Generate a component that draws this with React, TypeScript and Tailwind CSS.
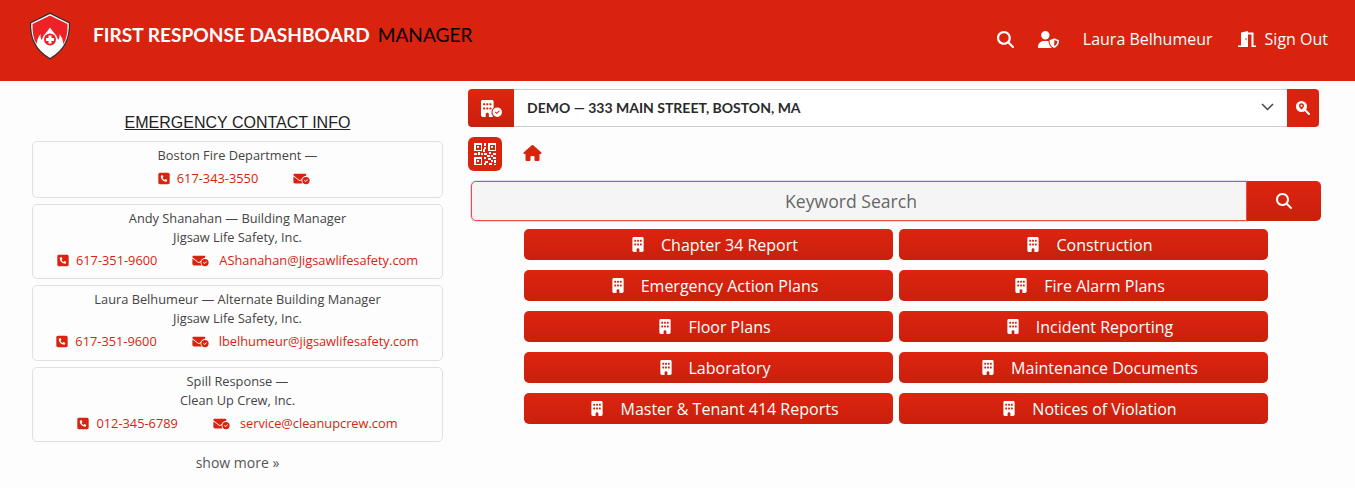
import React from "react";
import { FaBuilding, FaMagnifyingGlass, FaUserShield, FaHouse, FaSquarePhone, FaEnvelopeCircleCheck, FaBuildingCircleCheck } from "react-icons/fa6";

const Logo = () => (
  <svg width="42" height="48" viewBox="0 0 42 48" className="shrink-0">
    <path d="M21 0.500 L41 10.500 C41.500 25 37 38 21 47.500 C5 38 0.500 25 1 10.500 Z" fill="#2f2f2f" />
    <path d="M21 2 L39.800 11.300 C40.200 25 36 37 21 46 C6 37 1.800 25 2.200 11.300 Z" fill="#fff" />
    <path d="M21 3.500 L38.500 12 C38.800 20 37.500 27 34.500 32 L7.500 32 C4.500 27 3.200 20 3.500 12 Z" fill="#ec2227" />
    <path d="M21 15.500 C23.500 20 28 22.500 29 28 C30.500 26.500 30.800 24.500 30.300 22 C33 25 34 28.500 34.500 32 L7.500 32 C8 28.500 9 25 11.700 22 C11.200 24.500 11.500 26.500 13 28 C14 22.500 18.500 20 21 15.500 Z" fill="#fff" />
    <circle cx="21" cy="27.500" r="6" fill="#ec2227" />
    <path d="M19.500 23.500 h3 v2.500 h2.500 v3 h-2.500 v2.500 h-3 v-2.500 h-2.500 v-3 h2.500 Z" fill="#fff" />
  </svg>
);

const Finder = ({ x, y }: { x: number; y: number }) => (
  <g>
    <rect x={x + 0.75} y={y + 0.75} width="6.500" height="6.500" fill="none" stroke="#fff" strokeWidth="1.500" />
    <rect x={x + 3} y={y + 3} width="2" height="2" fill="#fff" />
  </g>
);

const dataBlocks: [number, number, number, number][] = [
  [10, 0, 2, 3], [10, 4, 2, 2], [9, 6, 2, 3],
  [0, 10, 3, 2], [4, 9, 2, 3], [7, 10, 2, 2], [10, 10, 3, 2],
  [15, 9, 2, 2], [19, 10, 3, 2], [13, 12, 3, 2], [17, 12, 2, 2],
  [10, 14, 2, 2], [14, 15, 3, 2], [19, 14, 3, 2], [11, 18, 3, 2],
  [17, 17, 2, 2], [20, 17, 2, 3], [10, 20, 2, 2], [15, 20, 3, 2], [20, 21, 2, 1],
];

const QrIcon = () => (
  <svg width="22" height="22" viewBox="0 0 22 22" fill="#fff" shapeRendering="crispEdges">
    <Finder x={0} y={0} />
    <Finder x={14} y={0} />
    <Finder x={0} y={14} />
    {dataBlocks.map(([x, y, w, h]) => <rect key={`${x}-${y}`} x={x} y={y} width={w} height={h} />)}
  </svg>
);

const SearchPin = () => (
  <svg width="14" height="14" viewBox="0 0 14 14">
    <circle cx="5.500" cy="5.500" r="5.500" fill="#fff" />
    <path d="M9 9 L13 13" stroke="#fff" strokeWidth="2" strokeLinecap="round" />
    <path d="M5.500 2.300 C3.900 2.300 3 3.400 3 4.700 C3 6.200 5.500 8.600 5.500 8.600 C5.500 8.600 8 6.200 8 4.700 C8 3.400 7.100 2.300 5.500 2.300 Z" fill="#d9230f" />
    <circle cx="5.500" cy="4.700" r="1" fill="#fff" />
  </svg>
);

const Door = () => (
  <svg width="18" height="16" viewBox="0 0 18 16" className="ml-[25px] shrink-0">
    <path d="M3 1.500 L10 0 V16 H0 V14.500 H3 Z" fill="#fff" />
    <circle cx="8" cy="8" r="0.800" fill="#d9230f" />
    <path d="M10 1.500 H15.500 V14.500 H18 V16 H13.500 V3.500 H10 Z" fill="#fff" />
  </svg>
);

type C = { lines: string[]; phone: string; email?: string; h: string };
const contacts: C[] = [
  { lines: ["Boston Fire Department —"], phone: "617-343-3550", h: "h-[57px]" },
  { lines: ["Andy Shanahan — Building Manager", "Jigsaw Life Safety, Inc."], phone: "617-351-9600", email: "AShanahan@Jigsawlifesafety.com", h: "h-[75px]" },
  { lines: ["Laura Belhumeur — Alternate Building Manager", "Jigsaw Life Safety, Inc."], phone: "617-351-9600", email: "lbelhumeur@jigsawlifesafety.com", h: "h-[76px]" },
  { lines: ["Spill Response —", "Clean Up Crew, Inc."], phone: "012-345-6789", email: "service@cleanupcrew.com", h: "h-[75px]" },
];

const docs = [
  "Chapter 34 Report", "Construction",
  "Emergency Action Plans", "Fire Alarm Plans",
  "Floor Plans", "Incident Reporting",
  "Laboratory", "Maintenance Documents",
  "Master & Tenant 414 Reports", "Notices of Violation",
];

export default function App() {
  return (
    <div className="h-[488px] w-[1355px] overflow-hidden bg-[#fdfdfd] font-['Open_Sans',sans-serif]">
      <header className="flex h-[81px] bg-[#d9230f] text-white">
        <div className="ml-[29px] mt-[12px]"><Logo /></div>
        <div className="ml-[22px] mt-[22px] h-[26px] font-['Lato',sans-serif] text-[19.100px] leading-[26px] whitespace-nowrap">
          <span className="font-bold">FIRST RESPONSE DASHBOARD</span>
          <span className="ml-[8px] text-[#000]">MANAGER</span>
        </div>
        <div className="ml-auto mr-[27px] mt-[28px] flex h-[22px] items-center text-[16px]">
          <FaMagnifyingGlass className="h-[17px] w-[17px]" />
          <FaUserShield className="ml-[24px] h-[17px] w-[21px]" />
          <span className="ml-[24px]">Laura Belhumeur</span>
          <Door />
          <span className="ml-[9px]">Sign Out</span>
        </div>
      </header>

      <main className="flex pl-[32px]">
        <section className="w-[411px]">
          <h2 className="mt-[31px] text-center font-['Liberation_Sans',sans-serif] text-[16px] leading-[22px] text-[#222] underline">EMERGENCY CONTACT INFO</h2>
          <div className="mt-[7px] flex flex-col gap-[6px]">
            {contacts.map((c) => (
              <div key={c.lines[0]} className={`${c.h} rounded-[5px] border border-[#e0e0e0] pt-[4px] text-center text-[12.800px] leading-[19px] text-[#444]`}>
                {c.lines.map((l) => <div key={l}>{l}</div>)}
                <div className={`mt-[4px] flex items-center justify-center leading-[19px] text-[#d9230f] ${c.email ? "" : "pr-[7px]"}`}>
                  <FaSquarePhone className="h-[13px] w-[12px]" />
                  <span className="ml-[7px]">{c.phone}</span>
                  <FaEnvelopeCircleCheck className="ml-[35px] h-[13px] w-[17px]" />
                  {c.email ? <span className="ml-[10px]">{c.email}</span> : null}
                </div>
              </div>
            ))}
          </div>
          <div className="mt-[11px] text-center text-[14px] leading-[20px] text-[#555]">show more »</div>
        </section>

        <section className="ml-[25px] w-[853px]">
          <div className="mt-[8px] flex h-[38px] w-[851px]">
            <div className="flex w-[46px] items-center justify-center rounded-l-[4px] bg-gradient-to-b from-[#e0250f] to-[#c9200d] text-white">
              <FaBuildingCircleCheck className="h-[17px] w-[21px]" />
            </div>
            <div className="flex flex-1 items-center justify-between border-y border-[#ccc] bg-white pb-[2px] pl-[13px] pr-[13px] font-['Lato',sans-serif] text-[14px] font-bold text-[#2a2a2a]">
              <span>DEMO — 333 MAIN STREET, BOSTON, MA</span>
              <svg width="13" height="8" viewBox="0 0 13 8" fill="none" stroke="#444" strokeWidth="1.500"><path d="M1 1 L6.500 6.500 L12 1" /></svg>
            </div>
            <div className="flex w-[32px] items-center justify-center rounded-r-[4px] bg-[#d9230f]">
              <SearchPin />
            </div>
          </div>

          <div className="mt-[10px] flex h-[34px] items-start">
            <div className="flex h-[34px] w-[34px] items-center justify-center rounded-[6px] bg-[#d9230f]">
              <QrIcon />
            </div>
            <FaHouse className="ml-[21px] mt-[8px] h-[16px] w-[19px] text-[#d9230f]" />
          </div>

          <div className="ml-[3px] mt-[10px] flex h-[40px] w-[850px]">
            <div className="flex flex-1 items-center justify-center rounded-l-[5px] border border-[#f0484e] bg-[#f5f5f5] pr-[16px] text-[17.600px] text-[#666] shadow-[0_0_0_1px_#e2e2e2]">Keyword Search</div>
            <div className="relative flex w-[74px] items-center justify-center rounded-r-[5px] bg-gradient-to-b from-[#dd240f] to-[#c9200d] text-white">
              <FaMagnifyingGlass className="h-[16px] w-[16px]" />
            </div>
          </div>

          <div className="ml-[56px] mt-[8px] grid w-[744px] grid-cols-2 gap-x-[6px] gap-y-[10px]">
            {docs.map((d) => (
              <div key={d} className="flex h-[31px] items-center justify-center rounded-[5px] bg-gradient-to-b from-[#dd240f] to-[#c9200d] pl-[13px] text-[16px] text-white">
                <FaBuilding className="mr-[17px] h-[15px] w-[12px]" />
                <span>{d}</span>
              </div>
            ))}
          </div>
        </section>
      </main>
    </div>
  );
}
